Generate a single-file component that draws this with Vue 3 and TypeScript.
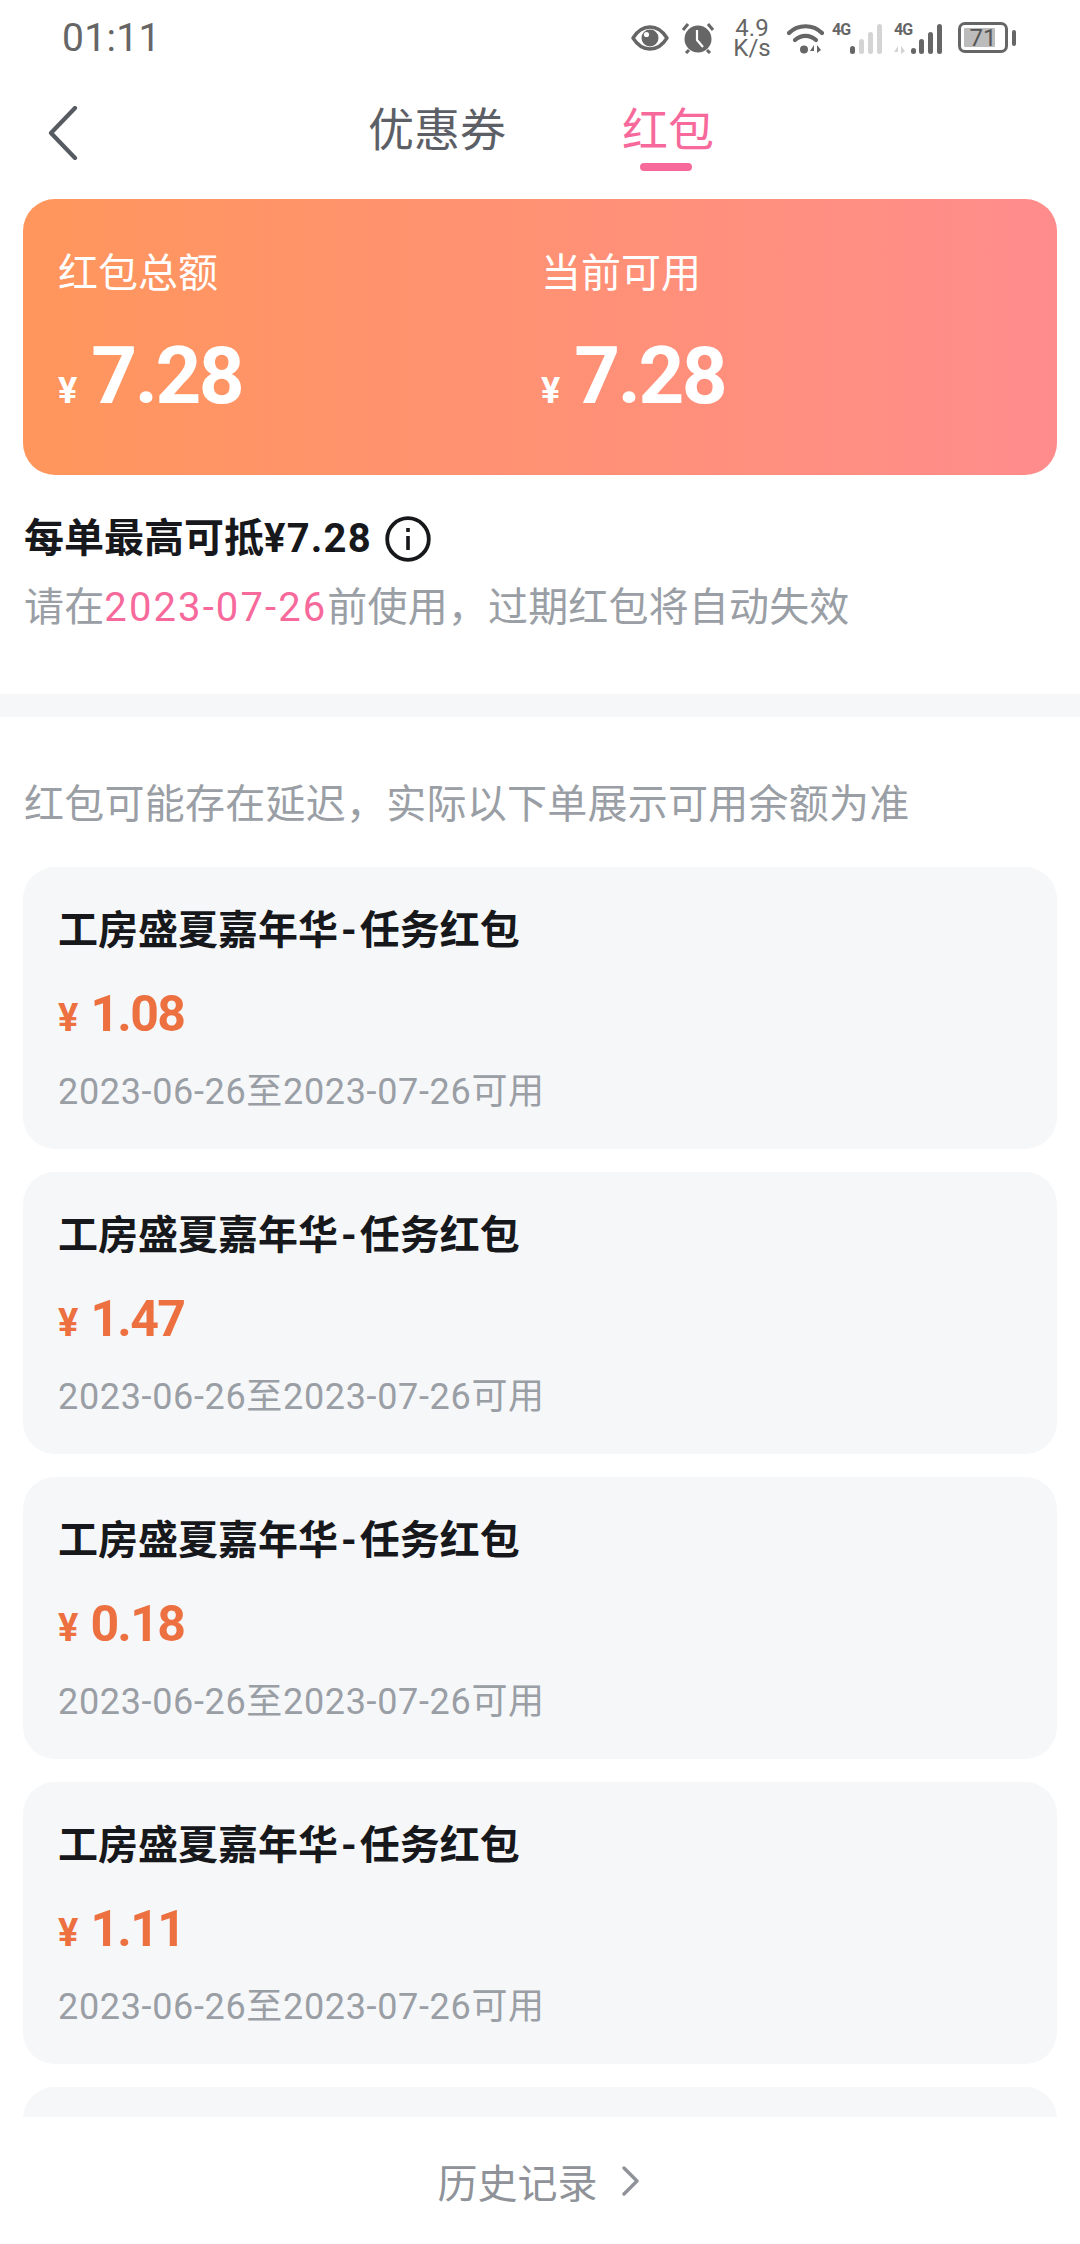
<script setup lang="ts">
interface Packet { amount: string }
const packets: Packet[] = [{ amount: '1.08' }, { amount: '1.47' }, { amount: '0.18' }, { amount: '1.11' }]
const balances: { label: string; value: string }[] = [
  { label: '红包总额', value: '7.28' },
  { label: '当前可用', value: '7.28' },
]
</script>

<template>
  <div class="page">
    <header class="status">
      <span class="time">01:11</span>
      <div class="status-icons">
        <svg class="eye" width="38" height="26" viewBox="0 0 38 26">
          <path d="M2 13C7 5 13 2 19 2s12 3 17 11c-5 8-11 11-17 11S7 21 2 13z" fill="none" stroke="#666" stroke-width="3.4" stroke-linejoin="round"/>
          <circle cx="19" cy="13" r="8.5" fill="#666"/>
          <circle cx="15.5" cy="9.5" r="2.6" fill="#fff"/>
        </svg>
        <svg class="alarm" width="34" height="32" viewBox="0 0 34 32">
          <circle cx="17" cy="17" r="13.500" fill="#666"/>
          <path d="M2 8l5-6M32 8l-5-6M8 28l-3 3M26 28l3 3" stroke="#666" stroke-width="3" fill="none"/>
          <path d="M16 8v10l6 7" stroke="#fff" stroke-width="2.2" fill="none"/>
        </svg>
        <div class="speed"><span>4.9</span><span>K/s</span></div>
        <svg class="wifi" width="37" height="32" viewBox="0 0 37 32">
          <path d="M2 11C11 2 26 2 35 11" stroke="#666" stroke-width="4.2" fill="none" stroke-linecap="round"/>
          <path d="M8 18c6-5.500 15-5.500 21 0" stroke="#666" stroke-width="4.200" fill="none" stroke-linecap="round"/>
          <circle cx="17" cy="27.500" r="4" fill="#666"/>
          <path d="M27 31V23l-4 6h4M30 23v8l4-3z" fill="#666"/>
        </svg>
        <div class="sim">
          <span class="g4">4G</span>
          <svg width="34" height="30" viewBox="0 0 34 30">
            <rect x="0" y="22" width="5" height="8" rx="2.500" fill="#666"/>
            <rect x="9" y="15" width="5" height="15" rx="2.500" fill="#d4d4d4"/>
            <rect x="18" y="8" width="5" height="22" rx="2.500" fill="#d4d4d4"/>
            <rect x="27" y="0" width="5" height="30" rx="2.500" fill="#d4d4d4"/>
          </svg>
        </div>
        <div class="sim sim-2">
          <span class="g4">4G</span>
          <svg width="52" height="30" viewBox="0 0 52 30">
            <path d="M4 30v-8l-4 6h4M7 22v8l4-3z" fill="#d4d4d4"/>
            <rect x="17" y="24" width="5" height="6" rx="2.500" fill="#666"/>
            <rect x="25" y="15" width="5" height="15" rx="2.500" fill="#666"/>
            <rect x="34" y="8" width="5" height="22" rx="2.500" fill="#666"/>
            <rect x="43" y="0" width="5" height="30" rx="2.500" fill="#666"/>
          </svg>
        </div>
        <div class="battery-wrap">
          <div class="battery"><div class="level"></div><span>71</span></div>
          <i class="nub"></i>
        </div>
      </div>
    </header>

    <nav class="nav">
      <svg class="back" width="30" height="54" viewBox="0 0 30 54">
        <path d="M27 2L3 27l24 25" fill="none" stroke="#565b61" stroke-width="4.200" stroke-linecap="round" stroke-linejoin="round"/>
      </svg>
      <div class="tabs">
        <span class="tab">优惠券</span>
        <span class="tab active">红包</span>
      </div>
    </nav>

    <section class="hero">
      <div v-for="(b, i) in balances" :key="i" class="balance">
        <div class="balance-label">{{ b.label }}</div>
        <div class="balance-value"><span class="yen">¥</span><span class="num">{{ b.value }}</span></div>
      </div>
    </section>

    <section class="info">
      <div class="info-title">
        <span>每单最高可抵<span class="price">¥7.28</span></span>
        <svg width="46" height="46" viewBox="0 0 46 46">
          <circle cx="23" cy="23" r="20.800" fill="none" stroke="#17181b" stroke-width="3.800"/>
          <rect x="21.200" y="20" width="3.600" height="14" fill="#17181b"/>
          <rect x="21.200" y="12" width="3.600" height="4" fill="#17181b"/>
        </svg>
      </div>
      <div class="info-sub">请在<span class="pink">2023-07-26</span>前使用，过期红包将自动失效</div>
    </section>

    <div class="band"></div>

    <main class="list-area">
      <p class="notice">红包可能存在延迟，实际以下单展示可用余额为准</p>
      <div class="list">
        <article v-for="(p, i) in packets" :key="i" class="card">
          <h3 class="card-title">工房盛夏嘉年华<span class="dash">-</span>任务红包</h3>
          <div class="card-amount"><span class="card-yen">¥</span><span class="card-num">{{ p.amount }}</span></div>
          <div class="card-date">2023-06-26至2023-07-26可用</div>
        </article>
        <article class="card"></article>
      </div>
    </main>

    <footer class="footer">
      <span>历史记录</span>
      <svg width="18" height="30" viewBox="0 0 18 30">
        <path d="M2 2l13 13L2 28" fill="none" stroke="#8f9399" stroke-width="3.400" stroke-linecap="round" stroke-linejoin="round"/>
      </svg>
    </footer>
  </div>
</template>

<style>
html, body { margin: 0; background: #fff; }
</style>

<style scoped>
.page {
  width: 1080px;
  height: 2244px;
  overflow: hidden;
  display: flex;
  flex-direction: column;
  background: #fff;
  font-family: Roboto, "Noto Sans CJK SC", sans-serif;
}
.status {
  height: 75px;
  flex: none;
  display: flex;
  align-items: center;
  justify-content: space-between;
  padding: 2px 64px 0 62px;
  box-sizing: border-box;
  color: #666;
}
.time { font-size: 39px; letter-spacing: 0.300px; line-height: 1; }
.status-icons { display: flex; align-items: center; margin-top: -2px; }
.eye { margin-right: 12px; }
.alarm { margin-right: 21px; }
.speed {
  display: flex; flex-direction: column; align-items: center;
  width: 32px; margin-right: 19px;
  font-size: 24px; line-height: 20px; color: #666;
}
.wifi { margin-right: 8px; }
.sim { position: relative; display: flex; align-items: flex-end; height: 32px; margin-right: 10px; }
.sim svg { margin-left: 18px; }
.sim-2 svg { margin-left: 0; }
.sim-2 { margin-right: 12px; }
.g4 {
  position: absolute; left: 0; top: 0;
  font-size: 16px; line-height: 15px; font-weight: 700; color: #666;
  letter-spacing: -1px;
}
.battery-wrap { display: flex; align-items: center; gap: 4px; }
.battery {
  position: relative; width: 50px; height: 31px; box-sizing: border-box;
  border: 3px solid #666; border-radius: 7px;
  display: flex; align-items: center; justify-content: center;
  font-size: 24px; color: #555; padding: 3px;
}
.level { position: absolute; left: 3px; top: 3px; bottom: 3px; width: 71%; background: #bcbcbc; border-radius: 1px; }
.battery span { position: relative; line-height: 1; }
.nub { display: block; width: 4px; height: 16px; background: #666; border-radius: 2px; }

.nav {
  height: 124px;
  flex: none;
  display: flex;
  align-items: flex-start;
  padding-left: 48px;
  box-sizing: border-box;
}
.back { margin-top: 31px; flex: none; }
.tabs { display: flex; margin-left: 290px; gap: 116px; margin-top: 25px; }
.tab {
  position: relative;
  font-size: 46px; line-height: 60px; color: #5c6066;
}
.tab.active { color: #f7699b; }
.tab.active::after {
  content: "";
  position: absolute; left: 18px; top: 63px;
  width: 52px; height: 8px; border-radius: 4px; background: #f7699b;
}

.hero {
  flex: none;
  height: 276px;
  margin: 0 23px;
  padding: 51px 35px 0;
  box-sizing: border-box;
  border-radius: 32px;
  background: linear-gradient(90deg, #ff965c 0%, #ff8c8c 100%);
  display: grid;
  grid-template-columns: 483px 1fr;
  color: #fff;
}
.balance-label { font-size: 40px; line-height: 48px; font-weight: 400; }
.balance-value { display: flex; align-items: baseline; margin-top: 31px; line-height: 94px; }
.yen { font-size: 36px; font-weight: 700; margin-right: 14px; }
.num { font-size: 80px; font-weight: 700; letter-spacing: -2.500px; }

.info { flex: none; height: 219px; padding: 41px 0 0 24px; box-sizing: border-box; }
.info-title {
  display: flex; align-items: center; gap: 13px;
  font-size: 40px; line-height: 46px; font-weight: 700; color: #17181b;
}
.price { letter-spacing: 1.200px; }
.info-sub { margin-top: 21px; font-size: 40px; line-height: 50px; color: #9a9ea5; letter-spacing: 0.170px; }
.pink { color: #f7699b; letter-spacing: 2.100px; }

.band { flex: none; height: 23px; background: #f6f7f9; }

.list-area { flex: 1; min-height: 0; overflow: hidden; padding: 0 23px; }
.notice { margin: 62px 1px 0; font-size: 40px; line-height: 52px; color: #9a9ea5; letter-spacing: 0.250px; }
.list { display: flex; flex-direction: column; gap: 23px; margin-top: 36px; }
.card {
  flex: none;
  height: 282px;
  box-sizing: border-box;
  padding: 38px 35px 0;
  border-radius: 32px;
  background: #f6f7f9;
}
.card-title { margin: 0; font-size: 40px; line-height: 52px; font-weight: 700; color: #17181b; }
.dash { padding: 0 3px; }
.card-amount { display: flex; align-items: baseline; margin-top: 27px; line-height: 60px; color: #ec7040; }
.card-yen { font-size: 38px; font-weight: 700; margin-right: 12px; }
.card-num { font-size: 50px; font-weight: 700; letter-spacing: -1.700px; }
.card-date { margin-top: 22px; font-size: 36px; line-height: 44px; color: #9a9ea5; letter-spacing: 0.660px; }

.footer {
  flex: none;
  height: 127px;
  background: #fff;
  display: flex;
  align-items: center;
  justify-content: center;
  gap: 24px;
  padding-right: 3px;
  font-size: 40px;
  color: #8f9399;
}
</style>
